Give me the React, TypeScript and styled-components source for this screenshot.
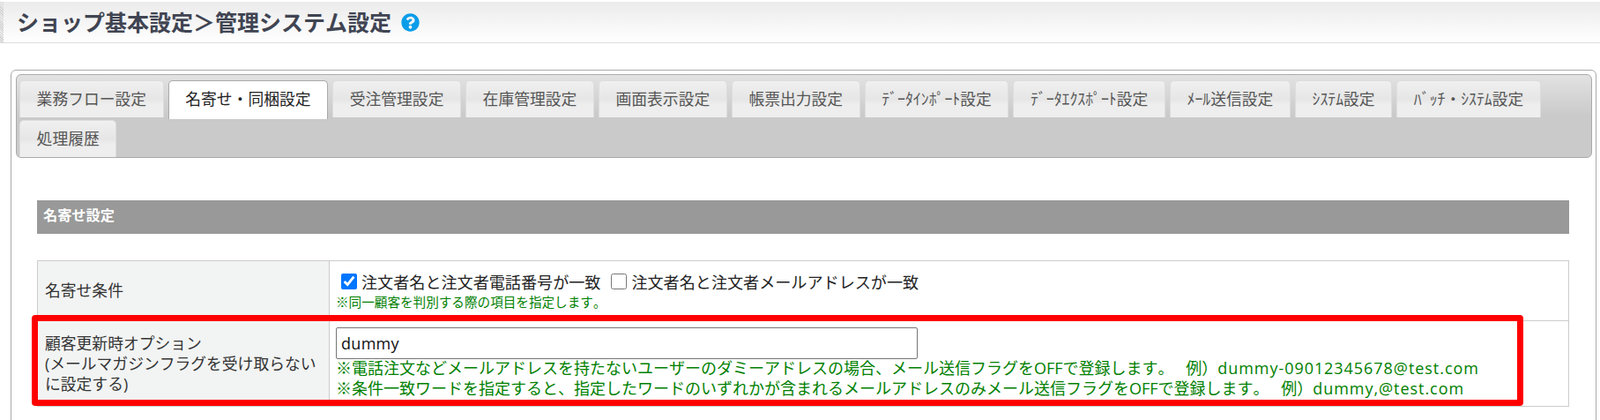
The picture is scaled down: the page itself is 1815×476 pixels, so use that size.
import styled, { createGlobalStyle } from 'styled-components';
import { FaQuestionCircle } from 'react-icons/fa';

const tabs = [
  '業務フロー設定',
  '名寄せ・同梱設定',
  '受注管理設定',
  '在庫管理設定',
  '画面表示設定',
  '帳票出力設定',
  'ﾃﾞｰﾀｲﾝﾎﾟｰﾄ設定',
  'ﾃﾞｰﾀｴｸｽﾎﾟｰﾄ設定',
  'ﾒｰﾙ送信設定',
  'ｼｽﾃﾑ設定',
  'ﾊﾞｯﾁ・ｼｽﾃﾑ設定',
  '処理履歴',
];

const GlobalStyle = createGlobalStyle`
  html,
  body {
    margin: 0;
    height: 476px;
    overflow: hidden;
    background: #fff;
  }

  body {
    font-family: 'Open Sans', 'Noto Sans CJK JP', sans-serif;
    font-kerning: none;
  }
`;

const Header = styled.header`
  display: flex;
  align-items: center;
  height: 46px;
  margin-top: 2px;
  border-bottom: 1px solid #ddd;
  background: linear-gradient(#ebebeb, #fff);
`;

const HatchStrip = styled.div`
  align-self: stretch;
  width: 4px;
  background: repeating-linear-gradient(45deg, #d4d4d4 0 1px, #ececec 1px 2px);
`;

const Title = styled.h1`
  display: flex;
  align-items: center;
  margin: 0 0 0 15px;
  font-size: 25px;
  font-weight: 700;
  line-height: 46px;
  color: #404452;
  white-space: nowrap;

  & > svg {
    margin-left: 11px;
    color: #0a9de9;
  }
`;

const Panel = styled.main`
  box-sizing: border-box;
  width: 1799px;
  height: 500px;
  margin: 30px 0 0 12px;
  padding: 4px 4px 0 5px;
  border: 1px solid #aaa;
  border-radius: 6px;
`;

const TabBar = styled.nav`
  display: flex;
  flex-wrap: wrap;
  row-gap: 3px;
  column-gap: 5px;
  box-sizing: border-box;
  height: 95px;
  padding: 6px 3px 0;
  border: 1px solid #aaa;
  border-radius: 6px;
  background: linear-gradient(#e2e2e2, #cacaca 50%);
`;

const Tab = styled.div<{ $active?: boolean }>`
  position: relative;
  box-sizing: border-box;
  height: ${(p) => (p.$active ? '44px' : '42px')};
  margin-bottom: ${(p) => (p.$active ? '-2px' : '0')};
  padding: 0 18.6px;
  border: 1px solid ${(p) => (p.$active ? '#aaa' : '#ddd')};
  border-bottom: none;
  border-radius: 5px 5px 0 0;
  background: ${(p) =>
    p.$active ? '#fff' : 'linear-gradient(#f0f0f0, #e6e6e6 50%, #eeeeee 65%)'};
  font-size: 17.8px;
  line-height: 40px;
  color: ${(p) => (p.$active ? '#222' : '#555')};
  white-space: nowrap;
`;

const Content = styled.section`
  margin: 48px 26px 0 24px;
`;

const SectionTitle = styled.h2`
  box-sizing: border-box;
  height: 38px;
  margin: 0 0 30px;
  padding-left: 7px;
  background: #999;
  font-size: 16.2px;
  font-weight: 700;
  line-height: 35px;
  color: #fff;
`;

const TableWrap = styled.div`
  position: relative;
`;

const SettingsTable = styled.table`
  width: 100%;
  border-collapse: collapse;
  table-layout: fixed;
`;

const Label = styled.th<{ $height: number }>`
  width: 331px;
  height: ${(p) => p.$height}px;
  box-sizing: border-box;
  padding: 0 0 0 8px;
  border: 1px solid #ccc;
  background: #f2f4f3;
  font-size: 17.8px;
  font-weight: 400;
  line-height: 23px;
  color: #333;
  text-align: left;
`;

const Value = styled.td`
  padding: 0 0 0 7px;
  border: 1px solid #ccc;
  vertical-align: top;
`;

const CheckRow = styled.div`
  display: flex;
  align-items: center;
  height: 26px;
  margin-top: 10px;
  padding-left: 6px;
  font-size: 18.1px;
  color: #222;
`;

const CheckLabel = styled.label`
  display: flex;
  align-items: center;
  margin-right: 12px;
`;

const Check = styled.input`
  width: 18px;
  height: 18px;
  margin: 0 5px 0 0;
  accent-color: #0075ff;
`;

const SmallNote = styled.div`
  font-size: 14.6px;
  line-height: 20px;
  color: #008000;
  white-space: nowrap;
`;

const TextField = styled.input`
  display: block;
  box-sizing: border-box;
  width: 660px;
  height: 36px;
  margin-top: 7px;
  padding: 0 5px;
  border: 1px solid #767676;
  border-radius: 2px;
  font-family: inherit;
  font-size: 18px;
  letter-spacing: 0.3px;
  color: #111;
`;

const Notes = styled.div`
  margin-top: -1px;
  font-size: 18px;
  line-height: 23px;
  color: #008000;
  white-space: nowrap;
`;

const Sample = styled.span`
  letter-spacing: 0.95px;
`;

const Highlight = styled.div`
  position: absolute;
  top: 62px;
  left: -6px;
  box-sizing: border-box;
  width: 1692px;
  height: 103px;
  border: 7px solid #f00;
  border-radius: 4px;
  pointer-events: none;
`;

const App = () => {
  return (
    <>
      <GlobalStyle />
      <Header>
        <HatchStrip />
        <Title>
          ショップ基本設定＞管理システム設定
          <FaQuestionCircle size={21} />
        </Title>
      </Header>
      <Panel>
        <TabBar>
          {tabs.map((tab) => (
            <Tab key={tab} $active={tab === '名寄せ・同梱設定'}>
              {tab}
            </Tab>
          ))}
        </TabBar>
        <Content>
          <SectionTitle>名寄せ設定</SectionTitle>
          <TableWrap>
            <SettingsTable>
              <tbody>
                <tr>
                  <Label $height={68}>名寄せ条件</Label>
                  <Value>
                    <CheckRow>
                      <CheckLabel>
                        <Check type="checkbox" defaultChecked />
                        注文者名と注文者電話番号が一致
                      </CheckLabel>
                      <CheckLabel>
                        <Check type="checkbox" />
                        注文者名と注文者メールアドレスが一致
                      </CheckLabel>
                    </CheckRow>
                    <SmallNote>※同一顧客を判別する際の項目を指定します。</SmallNote>
                  </Value>
                </tr>
                <tr>
                  <Label $height={97}>
                    顧客更新時オプション
                    <br />
                    (メールマガジンフラグを受け取らない
                    <br />
                    に設定する)
                  </Label>
                  <Value>
                    <TextField type="text" defaultValue="dummy" />
                    <Notes>
                      <div>
                        ※電話注文などメールアドレスを持たないユーザーのダミーアドレスの場合、メール送信フラグをOFFで登録します。　 例）
                        <Sample>dummy-09012345678@test.com</Sample>
                      </div>
                      <div>
                        ※条件一致ワードを指定すると、指定したワードのいずれかが含まれるメールアドレスのみメール送信フラグをOFFで登録します。　 例）
                        <Sample>dummy,@test.com</Sample>
                      </div>
                    </Notes>
                  </Value>
                </tr>
              </tbody>
            </SettingsTable>
            <Highlight />
          </TableWrap>
        </Content>
      </Panel>
    </>
  );
};

export default App;
